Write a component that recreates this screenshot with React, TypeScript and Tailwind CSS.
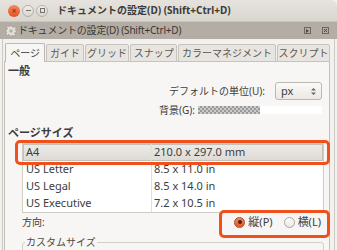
const sizes = [
  { name: "A4", dim: "210.0 x 297.0 mm", selected: true },
  { name: "US Letter", dim: "8.5 x 11.0 in" },
  { name: "US Legal", dim: "8.5 x 14.0 in" },
  { name: "US Executive", dim: "7.2 x 10.5 in" },
];

const tabs = [
  { label: "ページ", w: "w-[41px]" },
  { label: "ガイド", w: "w-[38px]" },
  { label: "グリッド", w: "w-[45px]" },
  { label: "スナップ", w: "w-[48px]" },
  { label: "カラーマネジメント", w: "w-[99px]" },
  { label: "スクリプト", w: "w-[54px]" },
];

function Gear() {
  return (
    <svg width="12" height="12" viewBox="0 0 24 24" className="shrink-0">
      <path
        fill="#e4e0da"
        stroke="#9a938b"
        strokeWidth="1"
        d="M10 1h4l.6 3.1 2.2.9 2.6-1.8 2.8 2.8-1.8 2.6.9 2.2L23 10v4l-3.1.6-.9 2.2 1.8 2.6-2.8 2.8-2.6-1.8-2.2.9L14 23h-4l-.6-3.1-2.2-.9-2.6 1.8-2.8-2.8 1.8-2.6-.9-2.2L1 14v-4l3.1-.6.9-2.2-1.8-2.6 2.8-2.8 2.6 1.8 2.2-.9z"
      />
      <circle cx="12" cy="12" r="3.5" fill="#b4ada5" />
    </svg>
  );
}

function Checker() {
  return (
    <div
      className="h-[8px] w-[62px] bg-[#c9c9c9]"
      style={{
        backgroundImage:
          "linear-gradient(45deg,#9a9a9a 25%,transparent 25%,transparent 75%,#9a9a9a 75%),linear-gradient(45deg,#9a9a9a 25%,transparent 25%,transparent 75%,#9a9a9a 75%)",
        backgroundSize: "4px 4px",
        backgroundPosition: "0 0,2px 2px",
      }}
    />
  );
}

export default function App() {
  return (
    <div
      className="relative h-[250px] w-[337px] overflow-hidden whitespace-nowrap bg-[#f2f1f0] text-[11px] text-[#3c3c3c]"
      style={{ fontFamily: '"Noto Sans", "Noto Sans CJK JP", sans-serif' }}
    >
      {/* window title bar */}
      <div className="flex h-[22px] items-center rounded-tr-[6px] border-b border-[#c9c5be] bg-gradient-to-b from-[#e6e3de] to-[#d9d5cf] pl-[8px]">
        <div className="flex items-center gap-[2px]">
          <span className="flex h-[12px] w-[12px] items-center justify-center rounded-full bg-gradient-to-b from-[#f7865a] to-[#e0521f] text-[8px] leading-none text-[#7a2a10]">
            ×
          </span>
          <span className="flex h-[12px] w-[12px] items-center justify-center rounded-full border border-[#b5b0a9] bg-gradient-to-b from-[#f1efec] to-[#d8d4ce]">
            <span className="h-px w-[5px] bg-[#77726b]" />
          </span>
          <span className="flex h-[12px] w-[12px] items-center justify-center rounded-full border border-[#b5b0a9] bg-gradient-to-b from-[#f1efec] to-[#d8d4ce]">
            <span className="h-[5px] w-[5px] border border-[#77726b]" />
          </span>
        </div>
        <span className="ml-[9px] text-[10px] font-bold text-[#3c3b37]">ドキュメントの設定(D) (Shift+Ctrl+D)</span>
      </div>

      {/* dock header */}
      <div className="flex h-[17px] items-center bg-[#b4ada5] pl-[5px] pr-[8px]">
        <Gear />
        <span className="ml-[1px] text-[10px] tracking-[-0.2px] text-[#3a3733]">ドキュメントの設定(D) (Shift+Ctrl+D)</span>
        <div className="ml-auto flex items-center gap-[11px]">
          <span className="flex h-[7px] w-[7px] items-center justify-center border border-[#6d675f]">
            <span className="h-0 w-0 border-y-[2px] border-l-[3px] border-y-transparent border-l-[#4b4640]" />
          </span>
          <svg width="7" height="7" viewBox="0 0 7 7">
            <rect x="0.5" y="0.5" width="6" height="6" fill="none" stroke="#6d675f" />
            <path d="M2 2l3 3M5 2l-3 3" stroke="#4b4640" />
          </svg>
        </div>
      </div>

      <div className="mx-[2px] h-full border-x border-[#cdc9c3] pl-[1px] pr-[4px] pt-[4px]">
        {/* tabs */}
        <div className="ml-[1px] flex h-[19px] items-end gap-[1px]">
          {tabs.map((t, i) => (
            <div
              key={t.label}
              className={
                i === 0
                  ? `relative z-10 flex h-[19px] ${t.w} items-center justify-center rounded-t-[2px] border border-b-0 border-[#bdb8b1] bg-[#f7f6f5] text-[10px] text-[#3c3c3c]`
                  : `flex h-[18px] ${t.w} items-center justify-center rounded-t-[2px] border border-[#c6c2bc] bg-[#e8e5e1] text-[10px] text-[#5a5753]`
              }
            >
              {t.label}
            </div>
          ))}
        </div>

        {/* page panel */}
        <div className="-mt-[1px] h-[200px] border border-[#c3bfb9] bg-[#f7f6f5] px-[3px]">
          <div className="h-[18px] text-[11px] font-bold leading-[18px]">一般</div>

          <div className="mt-[1px] flex h-[20px] items-center justify-end gap-[10px] pr-[4px]">
            <span className="text-[10px]">デフォルトの単位(U):</span>
            <div className="flex h-[18px] w-[47px] items-center justify-between rounded-[3px] border border-[#bcb8b1] bg-gradient-to-b from-[#fbfaf9] to-[#ebe8e4] pl-[5px] pr-[5px]">
              <span>px</span>
              <svg width="5" height="9" viewBox="0 0 5 9">
                <path d="M0 3.5L2.5 1 5 3.5zM0 5.5L2.5 8 5 5.5z" fill="#666" />
              </svg>
            </div>
          </div>

          <div className="mt-[1px] flex h-[16px] items-center justify-end gap-[3px] pr-[4px]">
            <span className="text-[10px]">背景(G):</span>
            <div className="flex h-[8px] w-[124px] bg-white">
              <Checker />
            </div>
          </div>

          <div className="mt-[7px] h-[16px] text-[11px] font-bold leading-[16px]">ページサイズ</div>

          {/* size list */}
          <div className="ml-[14px] mr-[2px] mt-[2px] border border-[#cfcbc5] bg-white">
            {sizes.map((s) => (
              <div
                key={s.name}
                className={
                  s.selected
                    ? "flex h-[17px] items-center border border-[#c4c0ba] bg-gradient-to-b from-[#ecebe8] to-[#dedbd6]"
                    : "flex h-[17px] items-center border border-transparent"
                }
              >
                <span className="w-[128px] border-r border-[#e2dfdb] pl-[2px]">{s.name}</span>
                <span className="pl-[2px]">{s.dim}</span>
              </div>
            ))}
          </div>

          <div className="ml-[14px] mt-[1px] flex h-[16px] items-center">
            <span className="text-[10px]">方向:</span>
            <div className="ml-auto mr-[5px] flex items-center">
              <span className="flex h-[11px] w-[11px] items-center justify-center rounded-full border border-[#b0481f] bg-gradient-to-b from-[#f3875d] to-[#de5a29]">
                <span className="h-[4px] w-[4px] rounded-full bg-[#4a2010]" />
              </span>
              <span className="ml-[3px] text-[11px]">縦(P)</span>
              <span className="ml-[11px] h-[11px] w-[11px] rounded-full border border-[#a9a49d] bg-gradient-to-b from-white to-[#ebe8e4]" />
              <span className="ml-[3px] text-[11px]">横(L)</span>
            </div>
          </div>

          <div className="relative ml-[14px] mr-[2px] mt-[12px] h-[30px] rounded-[3px] border border-[#d3cfc9]">
            <span className="absolute -top-[8px] left-[2px] bg-[#f7f6f5] px-[1px] text-[10px] leading-[14px] text-[#4a4a4a]">
              カスタムサイズ
            </span>
          </div>
        </div>
      </div>

      {/* annotation boxes */}
      <div className="pointer-events-none absolute left-[15px] top-[140px] h-[25px] w-[315px] rounded-[5px] border-[3px] border-[#f0501c]" />
      <div className="pointer-events-none absolute left-[219px] top-[210px] h-[28px] w-[111px] rounded-[5px] border-[3px] border-[#f0501c]" />
    </div>
  );
}
